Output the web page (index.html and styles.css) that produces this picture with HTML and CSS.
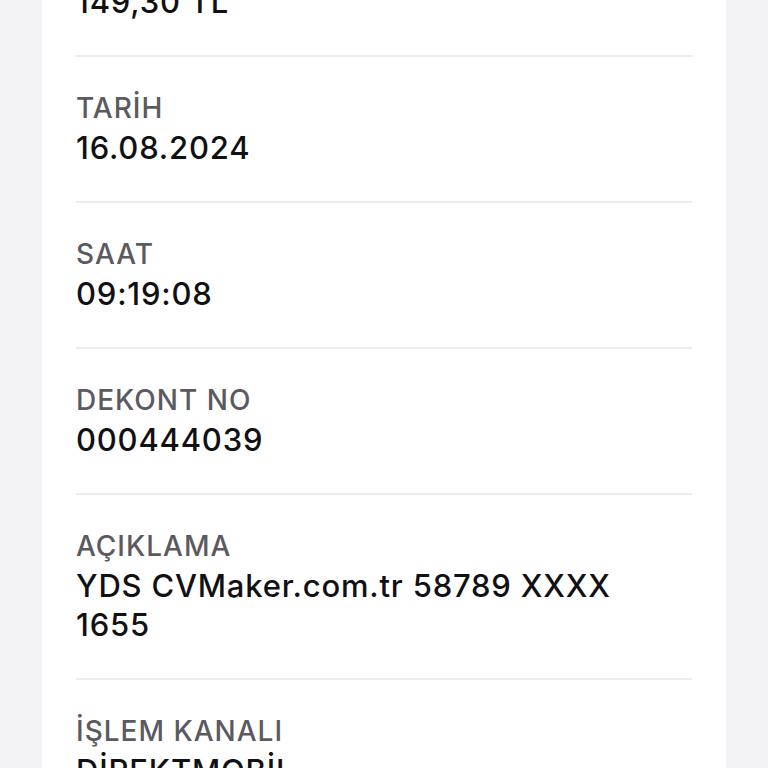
FILE: index.html
```html
<!DOCTYPE html>
<html lang="tr">
<head>
    <meta charset="UTF-8">
    <meta name="viewport" content="width=device-width, initial-scale=1.0">
    <title>Dekont</title>
    <link rel="stylesheet" href="styles.css">
</head>
<body>
    <div class="card">
        <div class="row">
            <div class="label">TUTAR</div>
            <div class="value">149,30 TL</div>
        </div>
        <div class="row">
            <div class="label">TARİH</div>
            <div class="value">16.08.2024</div>
        </div>
        <div class="row">
            <div class="label">SAAT</div>
            <div class="value">09:19:08</div>
        </div>
        <div class="row">
            <div class="label">DEKONT NO</div>
            <div class="value">000444039</div>
        </div>
        <div class="row">
            <div class="label">AÇIKLAMA</div>
            <div class="value">YDS CVMaker.com.tr 58789 XXXX 1655</div>
        </div>
        <div class="row">
            <div class="label">İŞLEM KANALI</div>
            <div class="value">DİREKTMOBİL</div>
        </div>
    </div>
</body>
</html>
```

FILE: styles.css
```css
html, body {
    height: 100%;
}
body {
    margin: 0;
    background-color: #f3f3f6;
    font-family: Inter, "Noto Sans", sans-serif;
    overflow: hidden;
}
.card {
    background: #ffffff;
    margin: -89px 42px 0;
    padding: 0 34px;
    min-height: 1000px;
}
.row {
    padding: 32px 0 34px;
    border-bottom: 2px solid #ececef;
}
.label {
    font-size: 28px;
    line-height: 39px;
    font-weight: 500;
    letter-spacing: 1px;
    color: #5a5a60;
}
.value {
    font-size: 31px;
    line-height: 39px;
    font-weight: 500;
    letter-spacing: 0.8px;
    color: #111114;
}
```
